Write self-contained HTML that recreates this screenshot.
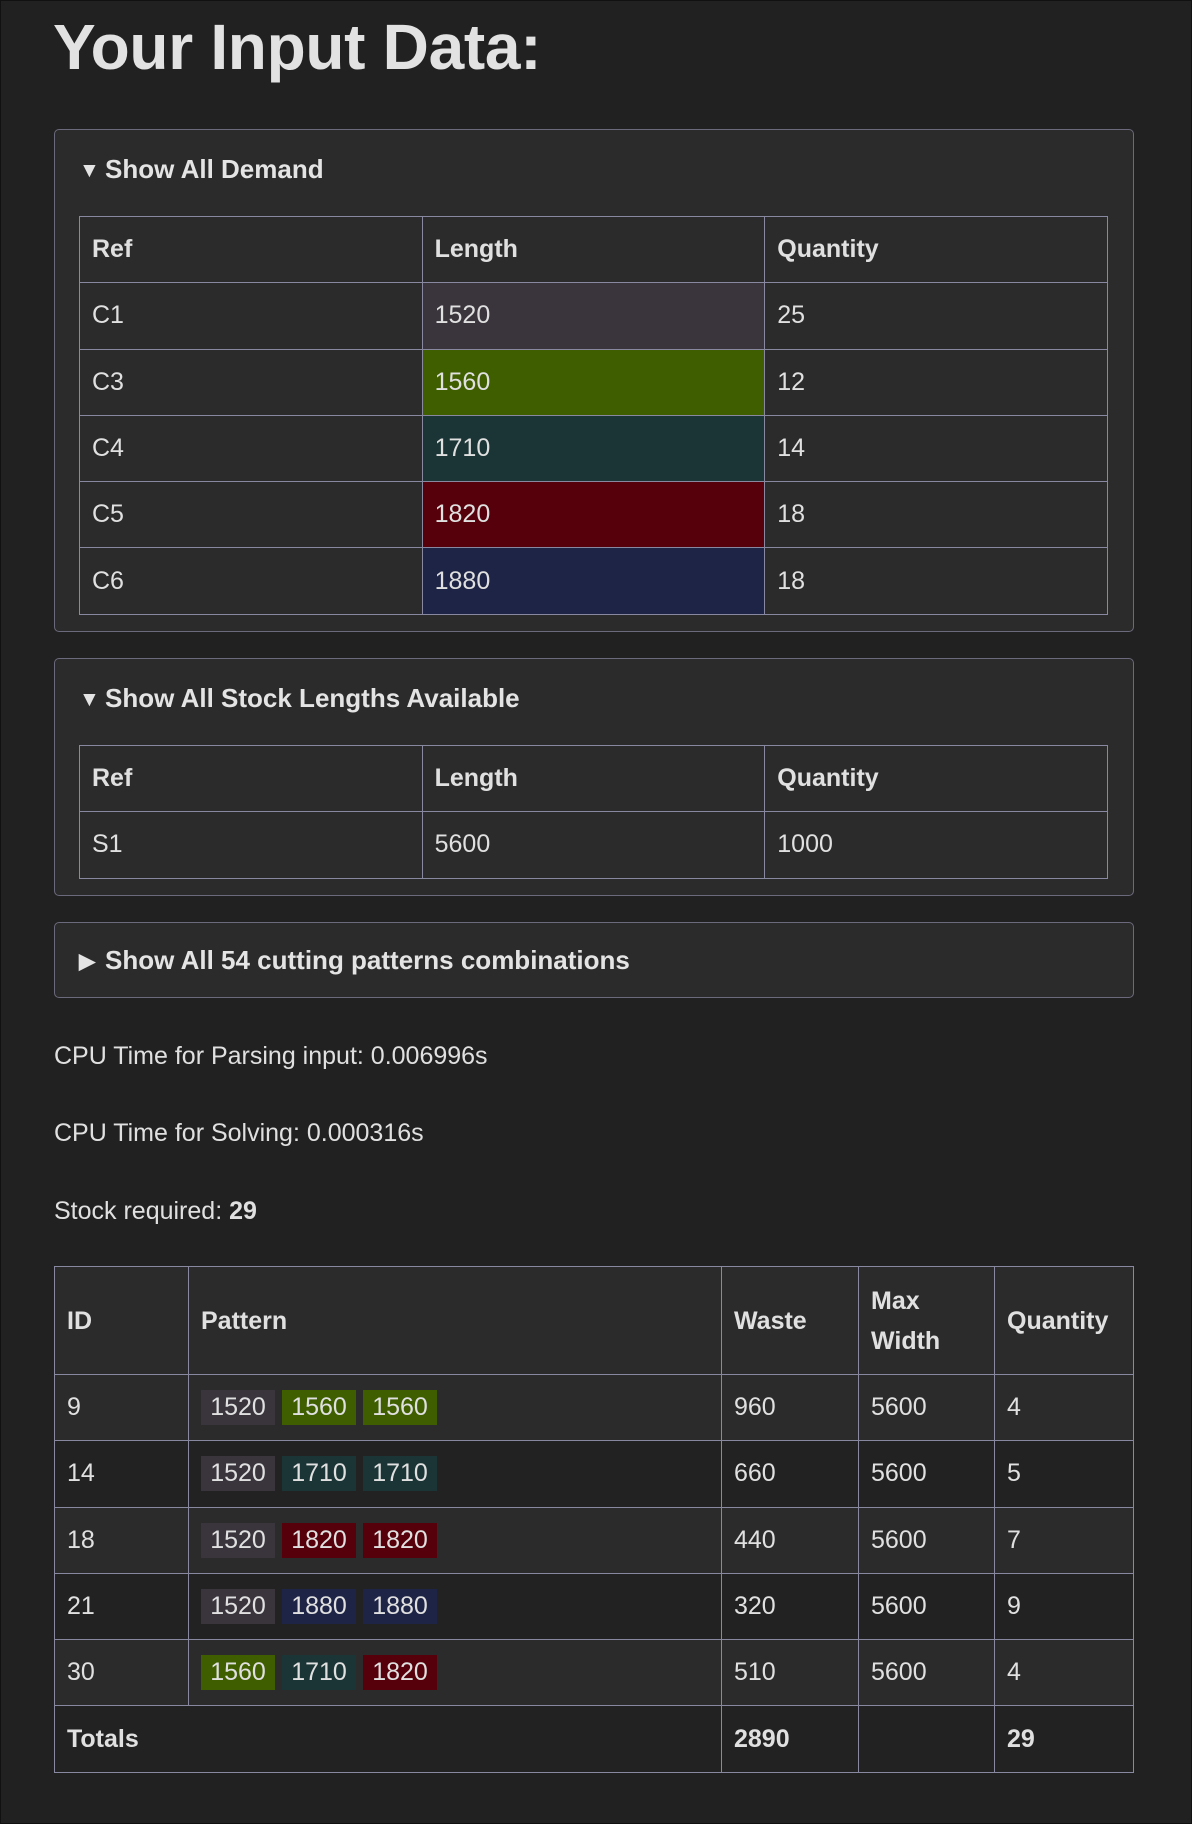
<!DOCTYPE html>
<html><head><meta charset="utf-8"><style>
*{box-sizing:border-box;margin:0;padding:0}
html,body{width:1192px;height:1824px;background:#212121;overflow:hidden}
body{font-family:"Liberation Sans",sans-serif;color:#e0e0e0;font-size:25px;position:relative;border:1px solid #111}
h1{position:absolute;left:52px;top:9px;font-size:64px;font-weight:bold;color:#e2e2e2;line-height:74px;letter-spacing:-0.3px}
.det{position:absolute;left:53px;width:1080px;background:#2b2b2b;border:1px solid #6a6a7c;border-radius:5px}
.sum{position:absolute;left:24px;font-weight:bold;font-size:26px;line-height:30px;color:#e4e4e4}
.sum .tri{display:inline-block;width:26px;font-size:21px;vertical-align:1px}
table{border-collapse:collapse;position:absolute}
td,th{border:1px solid #8888a0;text-align:left;padding:0 0 0 12px;vertical-align:middle;font-size:25px}
th{font-weight:bold}
.t1{left:24px;width:1029px}
.t1 td,.t1 th{width:343px;height:66.3px}
p{position:absolute;left:53px;font-size:25px;line-height:30px}
.rt{left:53px;top:1265px;width:1080px}
.rt td,.rt th{height:66.3px}
.rt tr.h th{height:108px;line-height:40px}
.a{background:#2b2b2b}.b{background:#222}
.c{display:inline-block;height:35px;line-height:35px;width:74px;text-align:center;margin-right:7px;vertical-align:middle}
.k1{background:#3a353d}.k2{background:#3e5e00}.k3{background:#1b3536}.k4{background:#55000a}.k5{background:#1e2445}
</style></head><body>
<h1>Your Input Data:</h1>

<div class="det" style="top:128px;height:503px">
<div class="sum" style="top:24px"><span class="tri">▼</span>Show All Demand</div>
<table class="t1" style="top:86px">
<tr><th>Ref</th><th>Length</th><th>Quantity</th></tr>
<tr><td>C1</td><td class="k1">1520</td><td>25</td></tr>
<tr><td>C3</td><td class="k2">1560</td><td>12</td></tr>
<tr><td>C4</td><td class="k3">1710</td><td>14</td></tr>
<tr><td>C5</td><td class="k4">1820</td><td>18</td></tr>
<tr><td>C6</td><td class="k5">1880</td><td>18</td></tr>
</table>
</div>

<div class="det" style="top:657px;height:238px">
<div class="sum" style="top:24px"><span class="tri">▼</span>Show All Stock Lengths Available</div>
<table class="t1" style="top:86px">
<tr><th>Ref</th><th>Length</th><th>Quantity</th></tr>
<tr><td>S1</td><td>5600</td><td>1000</td></tr>
</table>
</div>

<div class="det" style="top:921px;height:76px">
<div class="sum" style="top:22px"><span class="tri">▶</span>Show All 54 cutting patterns combinations</div>
</div>

<p style="top:1040px">CPU Time for Parsing input: 0.006996s</p>
<p style="top:1117px">CPU Time for Solving: 0.000316s</p>
<p style="top:1195px">Stock required: <b>29</b></p>

<table class="rt">
<tr class="h a"><th style="width:134px">ID</th><th style="width:533px">Pattern</th><th style="width:137px">Waste</th><th style="width:136px">Max<br>Width</th><th>Quantity</th></tr>
<tr class="a"><td>9</td><td><span class="c k1">1520</span><span class="c k2">1560</span><span class="c k2">1560</span></td><td>960</td><td>5600</td><td>4</td></tr>
<tr class="b"><td>14</td><td><span class="c k1">1520</span><span class="c k3">1710</span><span class="c k3">1710</span></td><td>660</td><td>5600</td><td>5</td></tr>
<tr class="a"><td>18</td><td><span class="c k1">1520</span><span class="c k4">1820</span><span class="c k4">1820</span></td><td>440</td><td>5600</td><td>7</td></tr>
<tr class="b"><td>21</td><td><span class="c k1">1520</span><span class="c k5">1880</span><span class="c k5">1880</span></td><td>320</td><td>5600</td><td>9</td></tr>
<tr class="a"><td>30</td><td><span class="c k2">1560</span><span class="c k3">1710</span><span class="c k4">1820</span></td><td>510</td><td>5600</td><td>4</td></tr>
<tr class="b"><th colspan="2">Totals</th><th>2890</th><th></th><th>29</th></tr>
</table>
</body></html>
